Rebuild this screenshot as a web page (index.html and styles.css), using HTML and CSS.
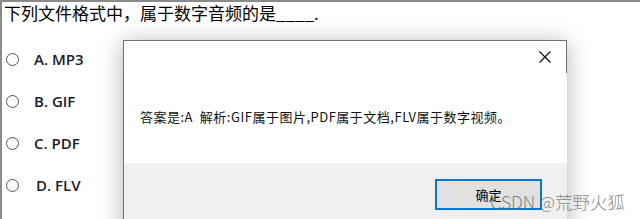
FILE: index.html
```html
<!DOCTYPE html>
<html lang="zh-CN">
<head>
  <meta charset="UTF-8">
  <title>单选题</title>
  <link rel="stylesheet" href="styles.css">
</head>
<body>
  <div class="quiz">
    <div class="question">下列文件格式中，属于数字音频的是____.</div>
    <div class="options">
      <label class="option"><span class="radio"></span><span class="opt-text">A. MP3</span></label>
      <label class="option"><span class="radio"></span><span class="opt-text">B. GIF</span></label>
      <label class="option"><span class="radio"></span><span class="opt-text">C. PDF</span></label>
      <label class="option"><span class="radio"></span><span class="opt-text shift">D. FLV</span></label>
    </div>
  </div>

  <div class="dialog">
    <div class="dialog-title">
      <svg class="close" width="12" height="12" viewBox="0 0 12 12">
        <path d="M0.5 0.5 L11.5 11.5 M11.5 0.5 L0.5 11.5" stroke="#000" stroke-width="1.1" fill="none"/>
      </svg>
    </div>
    <div class="dialog-body">答案是:A&nbsp;&nbsp;解析:GIF属于图片,PDF属于文档,FLV属于数字视频。</div>
    <div class="dialog-footer">
      <button class="ok-button">确定</button>
    </div>
  </div>

  <div class="watermark">CSDN @荒野火狐</div>
</body>
</html>
```

FILE: styles.css
```css
html, body {
  margin: 0;
  padding: 0;
  height: 100%;
  overflow: hidden;
  background: #fff;
}

body {
  position: relative;
  font-family: "Noto Sans CJK SC", "Noto Sans", sans-serif;
  color: #000;
}

.quiz {
  height: 100%;
  box-sizing: border-box;
  border-top: 2px solid #8a8a8a;
  border-left: 2px solid #8a8a8a;
}

.question {
  font-size: 17px;
  line-height: 22px;
  padding-left: 2px;
  white-space: nowrap;
}

.options {
  display: flex;
  flex-direction: column;
  gap: 20px;
  padding-top: 24px;
  padding-left: 4px;
}

.option {
  display: flex;
  align-items: center;
  height: 22px;
}

.radio {
  width: 11px;
  height: 11px;
  border: 1.5px solid #555;
  border-radius: 50%;
  background: #fff;
  flex-shrink: 0;
}

.opt-text {
  margin-left: 15px;
  font-family: "Open Sans", "Noto Sans", sans-serif;
  font-size: 15px;
  font-weight: 600;
  color: #1b1b2b;
}

.opt-text.shift {
  margin-left: 17px;
}

.dialog {
  position: absolute;
  left: 123px;
  top: 40px;
  width: 443px;
  height: 200px;
  background: #fff;
  border-top: 1px solid #707070;
  border-left: 1px solid #707070;
  box-shadow: 0 3px 22px rgba(0, 0, 0, 0.3);
  display: flex;
  flex-direction: column;
}

.dialog-title {
  height: 32px;
  border-right: 1px solid #707070;
  display: flex;
  justify-content: flex-end;
  align-items: center;
  padding-right: 15px;
}

.close {
  display: block;
}

.dialog-body {
  height: 90px;
  padding-left: 16px;
  font-size: 13px;
  letter-spacing: 0.5px;
  line-height: 18px;
  padding-top: 35px;
  box-sizing: border-box;
  color: #111;
  white-space: nowrap;
}

.dialog-footer {
  flex: 1;
  background: #f0f0f0;
  display: flex;
  justify-content: flex-end;
  align-items: flex-start;
  padding-top: 16px;
  padding-right: 25px;
}

.ok-button {
  width: 107px;
  height: 31px;
  border: 2px solid #0078d7;
  background: #e1e1e1;
  font-family: "Noto Sans CJK SC", sans-serif;
  font-size: 13px;
  color: #000;
  padding: 0;
}

.watermark {
  position: absolute;
  right: 15px;
  bottom: 5px;
  font-family: "Noto Sans CJK SC", sans-serif;
  font-size: 17.5px;
  font-weight: 300;
  color: rgba(105, 105, 105, 0.8);
  white-space: nowrap;
}
```
